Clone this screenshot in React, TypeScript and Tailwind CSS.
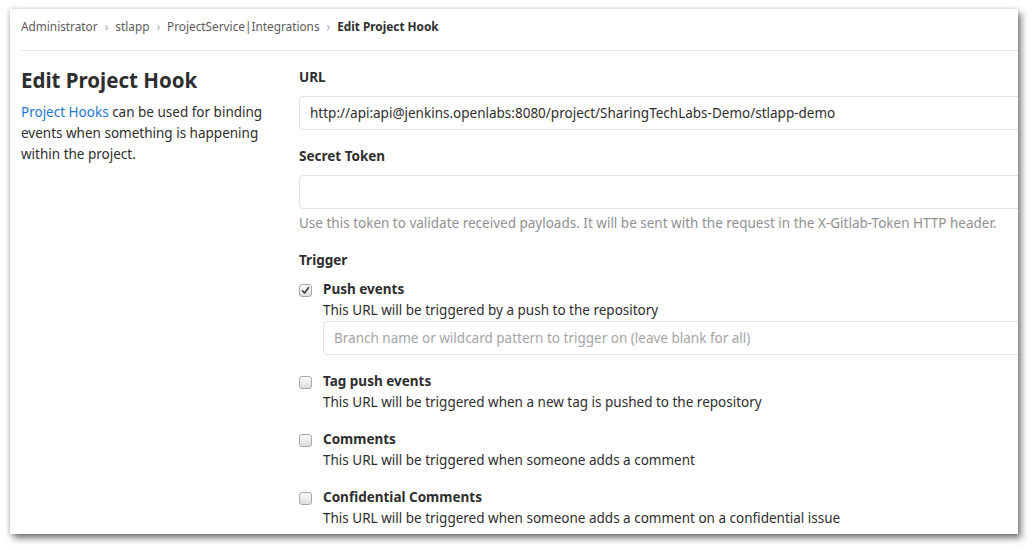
import React from "react";

const font = { fontFamily: '"Noto Sans", "Open Sans", sans-serif' };

function Check({ checked }: { checked?: boolean }) {
  return (
    <div className="mt-[5px] w-[13px] h-[13px] shrink-0 rounded-[3px] border border-[#a8a8a8] bg-gradient-to-b from-[#fbfbfb] to-[#dedede] flex items-center justify-center">
      {checked && (
        <svg width="9" height="9" viewBox="0 0 9 9">
          <path d="M1.5 4.8 L3.6 7 L7.6 1.6" fill="none" stroke="#3a3a3a" strokeWidth="1.6" strokeLinecap="round" strokeLinejoin="round" />
        </svg>
      )}
    </div>
  );
}

function Trigger({ title, desc, checked, children }: { title: string; desc: string; checked?: boolean; children?: React.ReactNode }) {
  return (
    <div className="flex gap-[11px]">
      <Check checked={checked} />
      <div className="flex-1">
        <div className="font-bold leading-[21px] text-[#2e2e2e]">{title}</div>
        <div className="leading-[21px] text-[#2e2e2e]">{desc}</div>
        {children}
      </div>
    </div>
  );
}

export default function App() {
  return (
    <div className="w-[1034px] h-[550px] bg-white overflow-hidden" style={font}>
      <div className="ml-[10px] mt-[9px] w-[1008px] h-[525px] bg-white overflow-hidden shadow-[3px_4px_7px_rgba(0,0,0,0.55),-1px_0_4px_rgba(0,0,0,0.15)]">
        <div className="ml-[11px] w-[1100px] text-[13.5px] text-[#2e2e2e]">
          <div className="h-[42px] box-border pt-[8px] border-b border-[#e5e5e5] flex items-start text-[11.8px] leading-[18px]">
            <span className="text-[#5c5c5c]">Administrator</span>
            <span className="text-[#a0a0a0] mx-[7px]">›</span>
            <span className="text-[#5c5c5c]">stlapp</span>
            <span className="text-[#a0a0a0] mx-[7px]">›</span>
            <span className="text-[#5c5c5c]">ProjectService|Integrations</span>
            <span className="text-[#a0a0a0] mx-[7px]">›</span>
            <span className="font-bold text-[#2e2e2e]">Edit Project Hook</span>
          </div>
          <div className="flex">
            <div className="w-[278px] shrink-0">
              <h3 className="mt-[17px] text-[20.5px] leading-[24px] font-bold text-[#2e2e2e]">Edit Project Hook</h3>
              <p className="mt-[10px] leading-[21px] w-[250px]">
                <span className="text-[#1f78d1]">Project Hooks</span> can be used for binding events when something is happening within the project.
              </p>
            </div>
            <div className="flex-1">
              <div className="mt-[16px] font-bold leading-[20px]">URL</div>
              <div className="mt-[9px] h-[34px] box-border border border-[#e0e0e0] rounded-[4px] px-[10px] flex items-center leading-[20px]">
                http://api:api@jenkins.openlabs:8080/project/SharingTechLabs-Demo/stlapp-demo
              </div>
              <div className="mt-[16px] font-bold leading-[20px]">Secret Token</div>
              <div className="mt-[9px] h-[34px] box-border border border-[#e0e0e0] rounded-[4px]" />
              <div className="mt-[5px] text-[13.5px] leading-[18px] text-[#919191]">
                Use this token to validate received payloads. It will be sent with the request in the X-Gitlab-Token HTTP header.
              </div>
              <div className="mt-[18px] font-bold leading-[20px]">Trigger</div>
              <div className="mt-[9px] flex flex-col gap-[16px]">
                <Trigger title="Push events" desc="This URL will be triggered by a push to the repository" checked>
                  <div className="h-[34px] box-border border border-[#e0e0e0] rounded-[4px] px-[10px] flex items-center text-[#a5a5a5]">
                    Branch name or wildcard pattern to trigger on (leave blank for all)
                  </div>
                </Trigger>
                <Trigger title="Tag push events" desc="This URL will be triggered when a new tag is pushed to the repository" />
                <Trigger title="Comments" desc="This URL will be triggered when someone adds a comment" />
                <Trigger title="Confidential Comments" desc="This URL will be triggered when someone adds a comment on a confidential issue" />
              </div>
            </div>
          </div>
        </div>
      </div>
    </div>
  );
}
